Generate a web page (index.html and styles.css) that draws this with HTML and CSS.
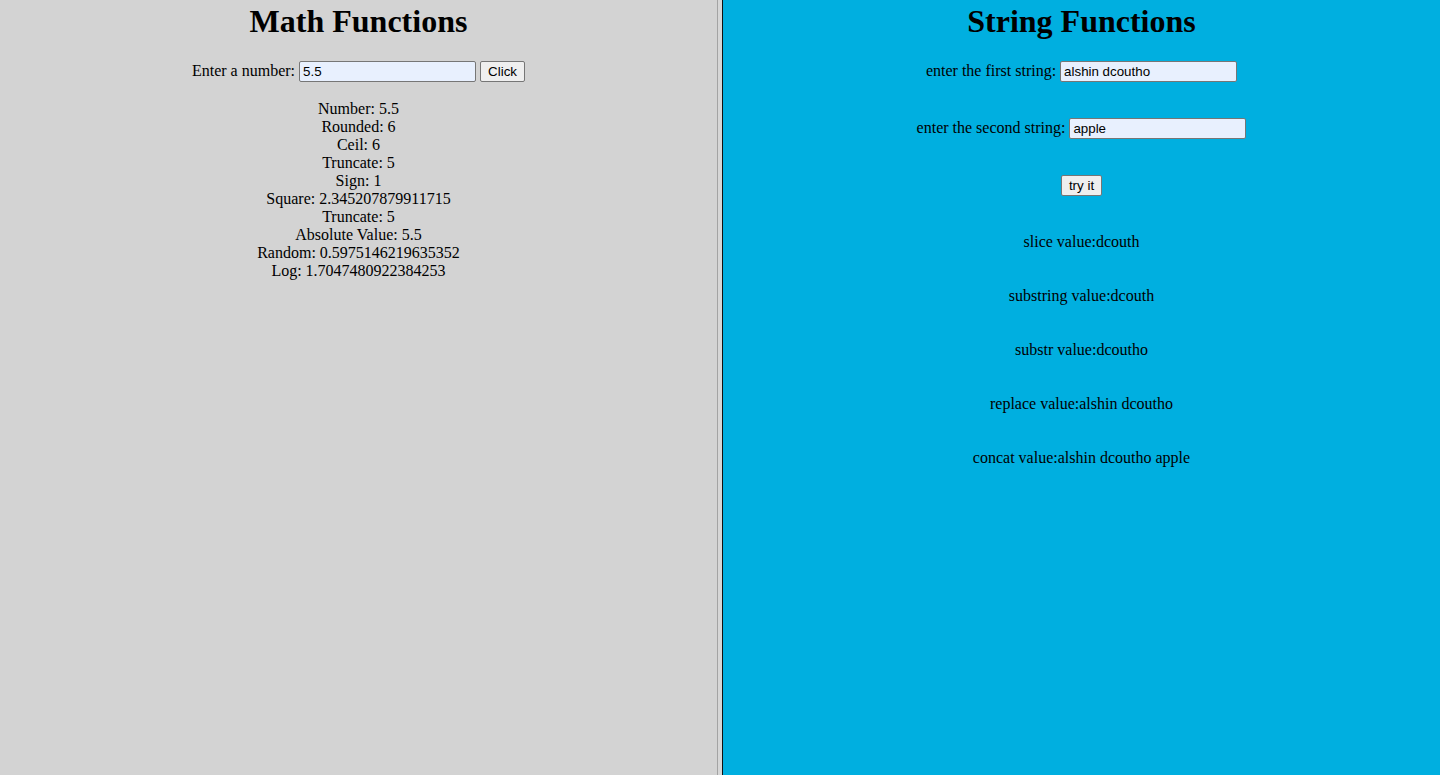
FILE: index.html
```html
<!DOCTYPE html>
<html>
<head>
<meta charset="utf-8">
<title>Functions</title>
<link rel="stylesheet" href="styles.css">
</head>
<body>
<div class="page">
  <section class="panel panel-math">
    <h1 class="title">Math Functions</h1>
    <div class="row">
      <label class="label">Enter a number:</label>
      <input class="field" type="text" value="5.5">
      <button class="btn btn-click">Click</button>
    </div>
    <div class="results">
      <div>Number: 5.5</div>
      <div>Rounded: 6</div>
      <div>Ceil: 6</div>
      <div>Truncate: 5</div>
      <div>Sign: 1</div>
      <div>Square: 2.345207879911715</div>
      <div>Truncate: 5</div>
      <div>Absolute Value: 5.5</div>
      <div>Random: 0.5975146219635352</div>
      <div>Log: 1.7047480922384253</div>
    </div>
  </section>
  <div class="divider"></div>
  <section class="panel panel-string">
    <h1 class="title">String Functions</h1>
    <div class="row row-gap">
      <label class="label">enter the first string:</label>
      <input class="field" type="text" value="alshin dcoutho">
    </div>
    <div class="row row-gap">
      <label class="label">enter the second string:</label>
      <input class="field" type="text" value="apple">
    </div>
    <div class="row">
      <button class="btn">try it</button>
    </div>
    <div class="outputs">
      <div class="out">slice value:dcouth</div>
      <div class="out">substring value:dcouth</div>
      <div class="out">substr value:dcoutho</div>
      <div class="out">replace value:alshin dcoutho</div>
      <div class="out">concat value:alshin dcoutho apple</div>
    </div>
  </section>
</div>
</body>
</html>
```
FILE: styles.css
```css
html, body {
  margin: 0;
  padding: 0;
  height: 100%;
}
body {
  font-family: "Liberation Serif", "Times New Roman", serif;
  font-size: 16px;
  color: #000;
  overflow: hidden;
}
.page {
  display: flex;
  height: 775px;
}
.panel {
  flex: 1 1 0;
  text-align: center;
  min-width: 0;
}
.panel-math {
  background: #d3d3d3;
}
.panel-string {
  background: #00afe0;
}
.divider {
  width: 4px;
  flex: 0 0 4px;
  background: #d6d6d6;
  border-left: 1px solid #a3a3a3;
  border-right: 1px solid #111;
}
.title {
  font-size: 32px;
  font-weight: bold;
  margin: 3px 0 0;
  line-height: 37px;
}
.row {
  display: flex;
  justify-content: center;
  align-items: center;
  height: 22px;
  margin-top: 20px;
}
.row-gap + .row {
  margin-top: 35px;
}
.label {
  margin-right: 4px;
}
.field {
  box-sizing: border-box;
  width: 177px;
  height: 21px;
  padding: 1px 3px;
  border: 1px solid #767676;
  border-radius: 2px;
  background: #e8f0fe;
  font-family: "Liberation Sans", Arial, sans-serif;
  font-size: 13.333px;
  color: #000;
  margin: 0;
}
.btn {
  box-sizing: border-box;
  height: 21px;
  padding: 1px 6.5px;
  border: 1px solid #767676;
  border-radius: 2px;
  background: #efefef;
  font-family: "Liberation Sans", Arial, sans-serif;
  font-size: 13.333px;
  color: #000;
  margin: 0 0 0 4px;
}
.btn-click {
  width: 45px;
  padding: 1px 0;
}
.panel-string .btn {
  margin-left: 0;
}
.results {
  margin-top: 18px;
  line-height: 18px;
}
.outputs {
  padding-top: 1px;
  line-height: 18px;
}
.out {
  margin-top: 36px;
}
```
